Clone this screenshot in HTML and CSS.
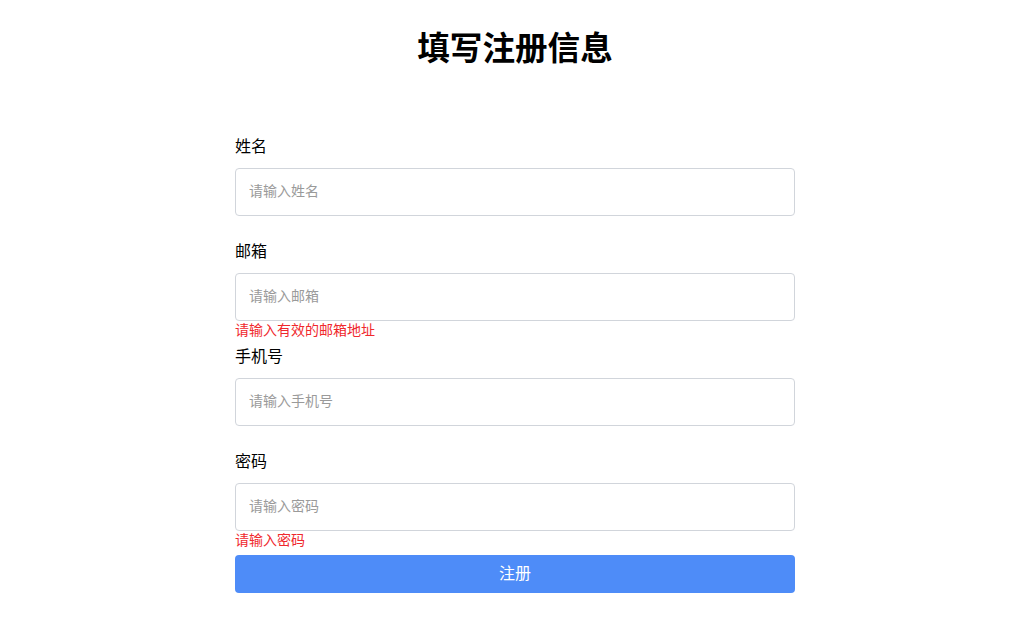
FILE: index.html
```html
<!DOCTYPE html>
<html lang="zh">
<head>
<meta charset="utf-8">
<title>填写注册信息</title>
<link rel="stylesheet" href="styles.css">
</head>
<body>
<div class="page">
  <h1 class="title">填写注册信息</h1>
  <form class="form">
    <div class="group">
      <label class="label">姓名</label>
      <input class="input" type="text" placeholder="请输入姓名">
      <div class="msg"></div>
    </div>
    <div class="group">
      <label class="label">邮箱</label>
      <input class="input" type="text" placeholder="请输入邮箱">
      <div class="msg">请输入有效的邮箱地址</div>
    </div>
    <div class="group">
      <label class="label">手机号</label>
      <input class="input" type="text" placeholder="请输入手机号">
      <div class="msg"></div>
    </div>
    <div class="group">
      <label class="label">密码</label>
      <input class="input" type="password" placeholder="请输入密码">
      <div class="msg">请输入密码</div>
    </div>
    <button class="btn" type="button">注册</button>
  </form>
</div>
</body>
</html>
```
FILE: styles.css
```css
html, body {
  margin: 0;
  padding: 0;
  background: #fff;
}
body {
  font-family: "Noto Sans CJK SC", "Noto Sans", sans-serif;
  color: #000;
}
.page {
  padding-left: 15px;
  display: flex;
  flex-direction: column;
  align-items: center;
}
.title {
  margin: 26px 0 0;
  font-size: 32.6px;
  line-height: 40px;
  font-weight: 700;
}
.form {
  width: 560px;
  margin-top: 68px;
  display: flex;
  flex-direction: column;
}
.group {
  display: flex;
  flex-direction: column;
}
.label {
  font-size: 16px;
  line-height: 22px;
  margin-bottom: 12px;
}
.input {
  box-sizing: border-box;
  height: 48px;
  width: 100%;
  border: 1px solid #d1d5db;
  border-radius: 4px;
  padding: 0 13px 5px;
  font-family: inherit;
  font-size: 14px;
  outline: none;
}
.input::placeholder {
  color: #9a9a9a;
}
.msg {
  height: 23px;
  font-size: 14px;
  line-height: 16px;
  color: #f0282d;
}
.btn {
  margin-top: 1px;
  height: 38px;
  padding: 0 0 5px;
  border: none;
  border-radius: 4px;
  background: #4e8cf8;
  color: #fff;
  font-family: inherit;
  font-size: 16px;
  cursor: pointer;
}
```
